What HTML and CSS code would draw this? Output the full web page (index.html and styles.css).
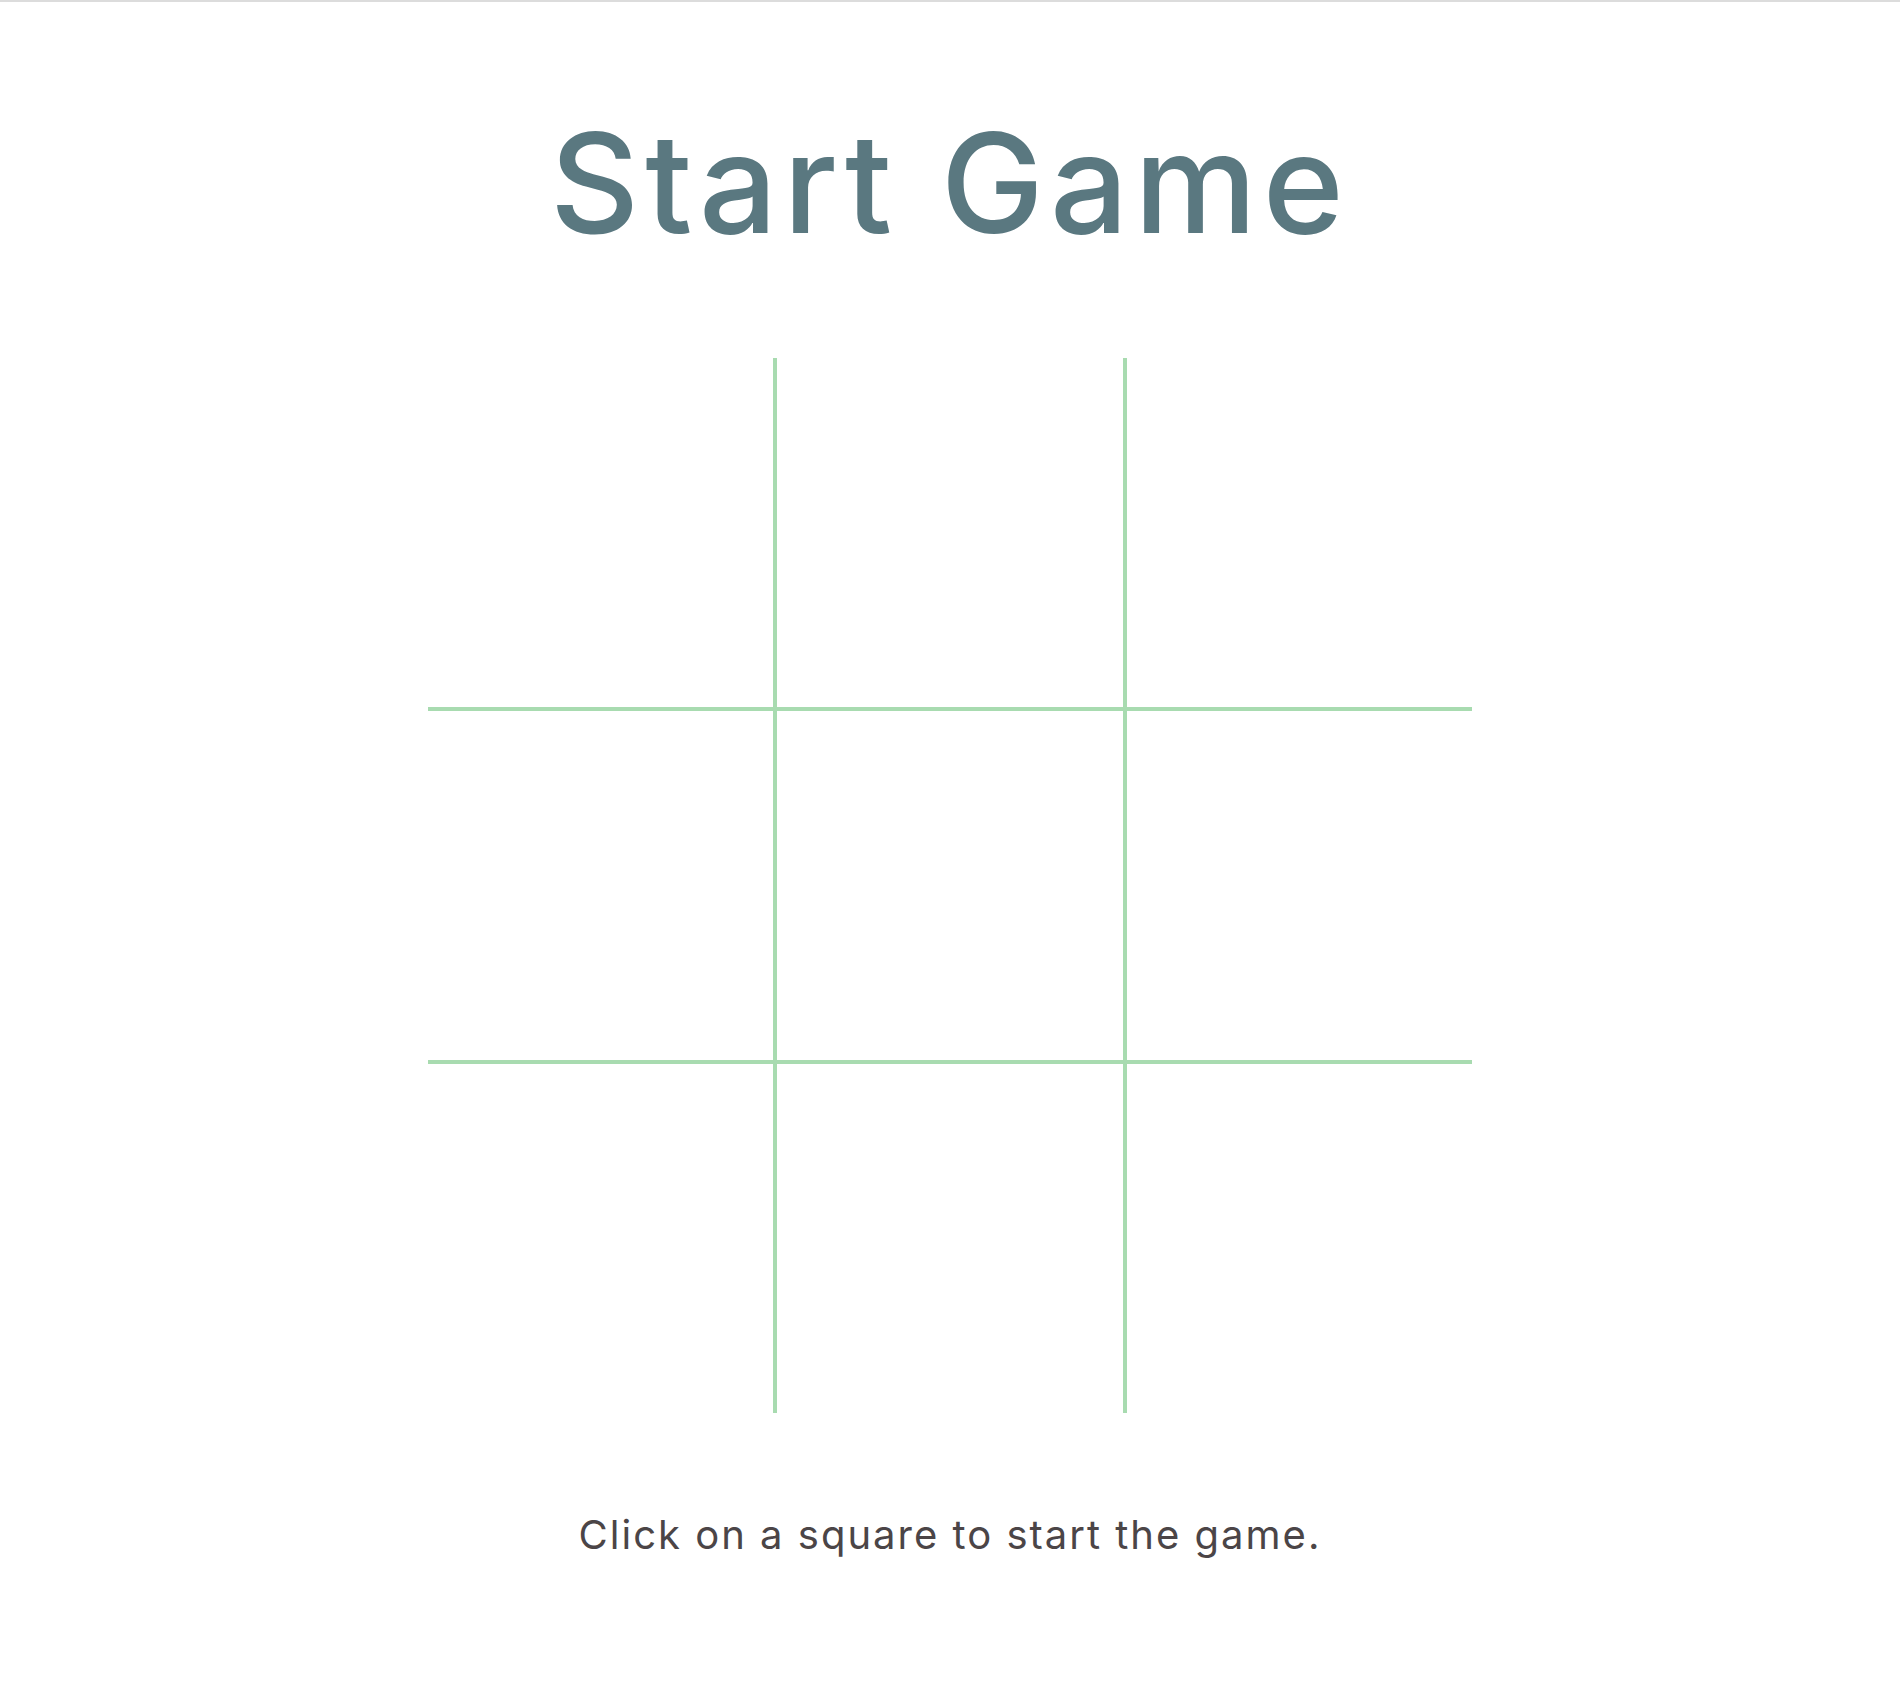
FILE: index.html
```html
<!DOCTYPE html>
<html lang="en">
<head>
<meta charset="utf-8">
<title>Tic Tac Toe</title>
<link rel="stylesheet" href="styles.css">
</head>
<body>
<main class="game">
  <h1 class="game-title">Start Game</h1>
  <div class="board">
    <div class="square"></div>
    <div class="square"></div>
    <div class="square"></div>
    <div class="square"></div>
    <div class="square"></div>
    <div class="square"></div>
    <div class="square"></div>
    <div class="square"></div>
    <div class="square"></div>
  </div>
  <p class="game-message">Click on a square to start the game.</p>
</main>
</body>
</html>
```
FILE: styles.css
```css
html, body {
  margin: 0;
  padding: 0;
  background: #ffffff;
}
body {
  border-top: 2px solid #dcdcdc;
  font-family: Inter, "Open Sans", "Liberation Sans", sans-serif;
  min-height: 1705px;
}
.game {
  display: flex;
  flex-direction: column;
  align-items: center;
}
.game-title {
  margin: 112px 0 0;
  font-size: 138px;
  line-height: 1;
  font-weight: 500;
  letter-spacing: 6px;
  color: #5a7880;
}
.board {
  margin-top: 106px;
  display: grid;
  grid-template-columns: 345px 346px 345px;
  grid-template-rows: 349px 349px 349px;
  gap: 4px;
  background: #a8dbb0;
}
.square {
  background: #ffffff;
}
.game-message {
  margin: 102px 0 0;
  font-size: 40px;
  line-height: 1;
  letter-spacing: 2px;
  font-weight: 400;
  color: #4b4547;
}
```
